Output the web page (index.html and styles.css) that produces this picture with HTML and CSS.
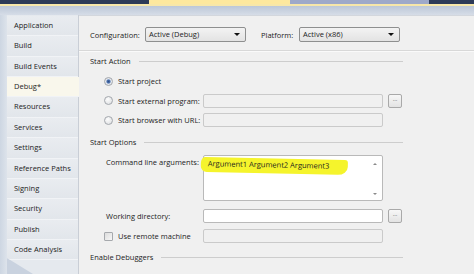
FILE: index.html
```html
<!DOCTYPE html>
<html lang="en">
  <head>
    <meta charset="UTF-8" />
    <title>Project Properties - Debug</title>
    <link rel="stylesheet" href="styles.css">
  </head>
  <body>
    <div class="doc-tabs">
      <div class="tab tab-dark"></div>
      <div class="tab tab-active"></div>
      <div class="tab tab-other"></div>
      <div class="tab tab-dark tab-fill"></div>
    </div>
    <div class="tab-accent"></div>
    <div class="tab-well"></div>

    <div class="frame">
      <div class="rail"></div>
      <ul class="pages">
        <li>Application</li>
        <li>Build</li>
        <li>Build Events</li>
        <li class="current">Debug*</li>
        <li>Resources</li>
        <li>Services</li>
        <li>Settings</li>
        <li>Reference Paths</li>
        <li>Signing</li>
        <li>Security</li>
        <li>Publish</li>
        <li>Code Analysis</li>
      </ul>

      <div class="page">
        <div class="config-row">
          <span class="config-label">Configuration:</span>
          <div class="select">Active (Debug)<span class="caret"></span></div>
          <span class="platform-label">Platform:</span>
          <div class="select">Active (x86)<span class="caret"></span></div>
        </div>
        <div class="rule"></div>

        <div class="content">
          <div class="group-title"><span>Start Action</span></div>

          <div class="field radio-first">
            <label class="opt"><span class="radio checked"></span>Start project</label>
          </div>
          <div class="field radio-next">
            <label class="opt"><span class="radio"></span>Start external program:</label>
            <div class="box disabled"></div>
            <div class="browse">...</div>
          </div>
          <div class="field radio-next">
            <label class="opt"><span class="radio"></span>Start browser with URL:</label>
            <div class="box disabled"></div>
          </div>

          <div class="group-title options"><span>Start Options</span></div>

          <div class="field tall">
            <label class="plain">Command line arguments:</label>
            <div class="box area">
              <span class="marker">Argument1 Argument2 Argument3</span>
              <span class="scroll-up"></span>
              <span class="scroll-down"></span>
            </div>
          </div>
          <div class="field option-next">
            <label class="plain">Working directory:</label>
            <div class="box"></div>
            <div class="browse">...</div>
          </div>
          <div class="field remote">
            <label class="opt"><span class="check"></span>Use remote machine</label>
            <div class="box disabled"></div>
          </div>

          <div class="group-title debuggers"><span>Enable Debuggers</span></div>
        </div>
      </div>
    </div>
  </body>
</html>
```

FILE: styles.css
```css
body {
  margin: 0;
  width: 474px;
  height: 274px;
  overflow: hidden;
  background: #c9d2df;
  font-family: "Open Sans", "Liberation Sans", sans-serif;
  font-size: 7.5px;
  color: #1c1c1c;
}

.doc-tabs {
  display: flex;
  height: 4px;
}

.tab {
  height: 4px;
}

.tab-dark {
  width: 149px;
  background: #2c3a57;
}

.tab-active {
  width: 141px;
  background: #fde89e;
}

.tab-other {
  width: 139px;
  background: #9ea9c9;
}

.tab-fill {
  flex: 1;
}

.tab-accent {
  height: 2px;
  background: #f7e7a9;
}

.tab-well {
  height: 9px;
  background: linear-gradient(to bottom, #bcc7d8, #d6dde7);
}

.frame {
  display: flex;
  height: 259px;
}

.rail {
  width: 7px;
  background: linear-gradient(to right, #cdd6e2, #dde3eb);
}

.pages {
  list-style: none;
  margin: 0;
  padding: 1px 0 0;
  width: 71px;
  background: #e5e9ee;
  border-right: 1px solid #c9ced6;
  clip-path: polygon(0 0, 100% 0, 100% 100%, 26px 100%, 0 calc(100% - 16px));
}

.pages li {
  height: 19.36px;
  line-height: 19.36px;
  padding-left: 7px;
  border-bottom: 1px solid #f1f3f6;
  background: linear-gradient(to bottom, #e9ecf0, #e2e6eb);
  white-space: nowrap;
}

.pages li.current {
  background: #f9f7ec;
  margin-left: -2px;
  padding-left: 9px;
  margin-right: -1px;
}

.page {
  flex: 1;
  background: #f0f0f0;
  border-top: 1px solid #d3d7dd;
}

.config-row {
  display: flex;
  align-items: center;
  height: 15px;
  margin: 11px 0 0 11px;
}

.config-label {
  width: 55px;
}

.platform-label {
  margin-left: 15px;
  width: 38px;
}

.select {
  position: relative;
  width: 96px;
  height: 13px;
  line-height: 13px;
  padding-left: 3px;
  border: 1px solid #8e8f8f;
  border-radius: 2px;
  background: linear-gradient(to bottom, #f3f3f3, #e3e3e3);
}

.caret {
  position: absolute;
  right: 5px;
  top: 5px;
  border-left: 3px solid transparent;
  border-right: 3px solid transparent;
  border-top: 3px solid #111;
}

.rule {
  height: 1px;
  margin-top: 8px;
  background: #d8d8d8;
  border-bottom: 1px solid #fafafa;
}

.content {
  width: 313px;
  padding-left: 11px;
}

.group-title {
  display: flex;
  align-items: center;
  height: 12px;
  margin-top: 3px;
}

.group-title::after {
  content: "";
  flex: 1;
  height: 1px;
  margin-left: 8px;
  background: #cdcdcd;
}

.group-title.options {
  margin-top: 9px;
}

.group-title.debuggers {
  margin-top: 8px;
}

.field {
  display: flex;
  align-items: center;
  height: 14px;
  padding-left: 14px;
}

.field.radio-first {
  margin-top: 7px;
}

.field.radio-next {
  margin-top: 5.5px;
}

.field.tall {
  height: 46px;
  align-items: flex-start;
  margin-top: 7px;
}

.field.tall .plain {
  line-height: 14px;
}

.field.option-next {
  margin-top: 8px;
}

.field.remote {
  margin-top: 6px;
}

.opt,
.plain {
  display: flex;
  align-items: center;
  width: 99px;
  flex: none;
}

.plain {
  padding-left: 2px;
  width: 97px;
}

.radio {
  width: 7px;
  height: 7px;
  margin-right: 5px;
  border: 1px solid #a3a7ad;
  border-radius: 50%;
  background: radial-gradient(circle at 40% 35%, #fdfdfd, #d9dbde);
}

.radio.checked {
  background: radial-gradient(circle, #2f4f86 0, #4e73b0 1.6px, #e9ecf0 2.6px, #d5d8dc 100%);
}

.check {
  width: 7px;
  height: 7px;
  margin-right: 5px;
  border: 1px solid #a6a9ad;
  border-radius: 1px;
  background: linear-gradient(to bottom right, #dcdcdc, #f7f7f7);
}

.box {
  width: 178px;
  height: 12px;
  border: 1px solid #b9b9b9;
  border-radius: 2px;
  background: #fff;
}

.box.disabled {
  background: #f0f0f0;
  border-color: #cacaca;
}

.box.area {
  position: relative;
  height: 44px;
  padding-left: 4px;
  width: 174px;
  line-height: 14px;
}

.marker {
  display: inline-block;
  line-height: 13px;
  margin-left: -7px;
  padding: 0 19px 2px 7px;
  background: #f5f42c;
  border-radius: 4px 3px 10px 6px / 6px 3px 8px 6px;
  transform: rotate(1.2deg);
  transform-origin: left top;
}

.scroll-up,
.scroll-down {
  position: absolute;
  right: 5px;
  border-left: 2px solid transparent;
  border-right: 2px solid transparent;
}

.scroll-up {
  top: 7px;
  border-bottom: 2px solid #8a8a8a;
}

.scroll-down {
  bottom: 5px;
  border-top: 2px solid #8a8a8a;
}

.browse {
  width: 12px;
  height: 12px;
  margin-left: 5px;
  border: 1px solid #a9a9a9;
  border-radius: 2px;
  background: linear-gradient(to bottom, #f7f7f7, #e3e3e3);
  text-align: center;
  line-height: 8px;
  font-size: 6px;
  color: #555;
}
```
